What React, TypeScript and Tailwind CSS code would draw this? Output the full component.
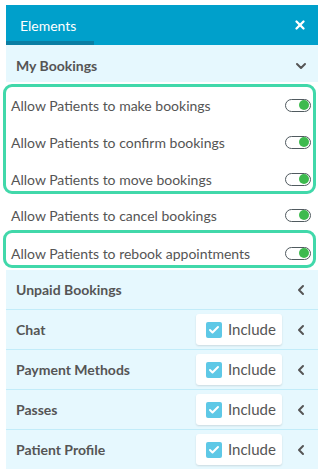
import { Check, ChevronDown, ChevronLeft, X } from "lucide-react";

const toggles1 = [
	"Allow Patients to make bookings",
	"Allow Patients to confirm bookings",
	"Allow Patients to move bookings",
];

const sections = [
	{ title: "Unpaid Bookings", include: false },
	{ title: "Chat", include: true },
	{ title: "Payment Methods", include: true },
	{ title: "Passes", include: true },
	{ title: "Patient Profile", include: true },
];

function Toggle() {
	return (
		<span className="flex h-[13px] w-[26px] items-center justify-end rounded-full border-[1.5px] border-[#505a5f] bg-white pr-[1px]">
			<span className="h-[10px] w-[10px] rounded-full bg-[#3dba4e]" />
		</span>
	);
}

function ToggleRow({ label }: { label: string }) {
	return (
		<div className="flex h-6 items-center justify-between pl-[5px] pr-[2px] text-[14px] text-[#555]">
			<span>{label}</span>
			<Toggle />
		</div>
	);
}

function IncludeButton() {
	return (
		<span className="flex h-[31px] w-[86px] items-center gap-[6px] rounded-[3px] bg-white pl-[10px] text-[15px] font-normal text-[#555] shadow-[0_1px_2px_rgba(0,0,0,0.12)]">
			<span className="flex h-4 w-4 items-center justify-center rounded-[2px] bg-[#5ec8e6]">
				<Check className="h-3 w-3 text-white" strokeWidth={4} />
			</span>
			Include
		</span>
	);
}

export default function App() {
	return (
		<div className="h-[469px] w-[321px] overflow-hidden bg-white pt-[5px] font-['Lato',sans-serif]">
			<div className="ml-[6px] w-[312px]">
				<div className="flex h-10 items-stretch justify-between bg-[#00a0cb]">
					<div className="flex w-[88px] items-center border-b-4 border-[#0b7ea3] pl-[14px] pt-1 text-[14px] text-white">
						Elements
					</div>
					<div className="flex items-center pr-[11px]">
						<X className="h-[14px] w-[14px] text-white" strokeWidth={4} />
					</div>
				</div>
				<div className="flex h-[37px] items-center justify-between bg-[#e6f8fe] pl-[10px] pr-[9px] pt-1 text-[14px] font-bold text-[#555]">
					My Bookings
					<ChevronDown className="h-[16px] w-[16px]" strokeWidth={3} />
				</div>
			</div>
			<div className="mx-[3px] mt-[2px] w-[313px]">
				<div className="flex flex-col gap-[13px] rounded-[9px] border-[3px] border-[#41d8aa] pt-[6px]">
					{toggles1.map((t) => (
						<ToggleRow key={t} label={t} />
					))}
				</div>
				<div className="border-[3px] border-transparent pt-[6px]">
					<ToggleRow label="Allow Patients to cancel bookings" />
				</div>
				<div className="rounded-[9px] border-[3px] border-[#41d8aa] pt-[8px]">
					<ToggleRow label="Allow Patients to rebook appointments" />
				</div>
			</div>
			<div className="ml-[6px] mt-[2px] w-[312px]">
				{sections.map((s) => (
					<div
						key={s.title}
						className="flex h-10 items-center justify-between border-b border-[#c2ecf9] bg-[#e6f8fe] pl-[10px] pr-[9px] text-[14px] font-bold text-[#555]"
					>
						<span>{s.title}</span>
						<div className="flex items-center gap-[11px]">
							{s.include ? <IncludeButton /> : null}
							<ChevronLeft className="h-[16px] w-[16px]" strokeWidth={3} />
						</div>
					</div>
				))}
			</div>
		</div>
	);
}
